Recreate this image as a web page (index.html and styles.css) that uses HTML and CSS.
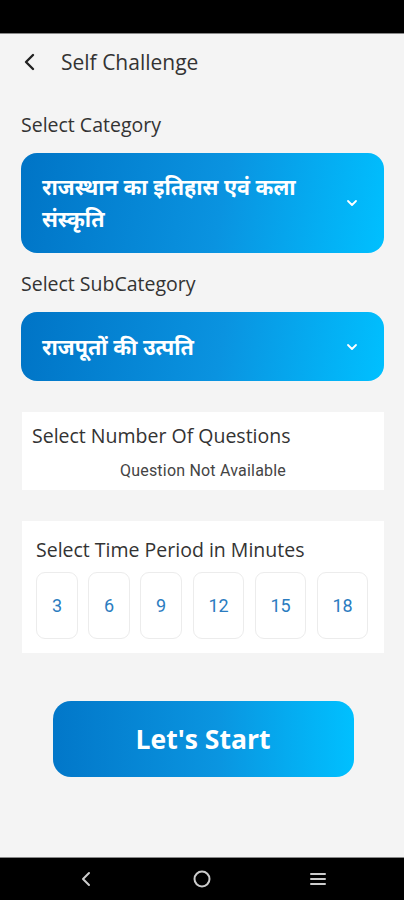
FILE: index.html
```html
<!DOCTYPE html>
<html lang="hi">
<head>
  <meta charset="UTF-8" />
  <meta name="viewport" content="width=device-width, initial-scale=1.0">
  <title>Self Challenge</title>
  <link rel="stylesheet" href="styles.css">
</head>
<body>
  <div class="status-bar"></div>

  <div class="screen">
    <div class="header">
      <svg class="back" width="14" height="18" viewBox="0 0 14 18">
        <path d="M10 2 L3 9 L10 16" fill="none" stroke="#222" stroke-width="2.4" stroke-linecap="round" stroke-linejoin="round"/>
      </svg>
      <span class="title">Self Challenge</span>
    </div>

    <div class="label">Select Category</div>
    <div class="dropdown tall">
      <span class="dd-text">राजस्थान का इतिहास एवं कला संस्कृति</span>
      <svg class="chev" width="12" height="8" viewBox="0 0 12 8">
        <path d="M2 2 L6 6 L10 2" fill="none" stroke="#fff" stroke-width="1.8" stroke-linecap="round" stroke-linejoin="round"/>
      </svg>
    </div>

    <div class="label">Select SubCategory</div>
    <div class="dropdown">
      <span class="dd-text">राजपूतों की उत्पति</span>
      <svg class="chev" width="12" height="8" viewBox="0 0 12 8">
        <path d="M2 2 L6 6 L10 2" fill="none" stroke="#fff" stroke-width="1.8" stroke-linecap="round" stroke-linejoin="round"/>
      </svg>
    </div>

    <div class="card questions">
      <div class="card-title">Select Number Of Questions</div>
      <div class="empty">Question Not Available</div>
    </div>

    <div class="card time">
      <div class="card-title">Select Time Period in Minutes</div>
      <div class="chips">
        <div class="chip">3</div>
        <div class="chip">6</div>
        <div class="chip">9</div>
        <div class="chip wide">12</div>
        <div class="chip wide">15</div>
        <div class="chip wide">18</div>
      </div>
    </div>

    <div class="start-wrap">
      <button type="button" class="start">Let's Start</button>
    </div>
  </div>

  <div class="nav-bar">
    <svg width="20" height="20" viewBox="0 0 20 20">
      <path d="M13 4 L7 10 L13 16" fill="none" stroke="#ccc" stroke-width="2" stroke-linecap="round" stroke-linejoin="round"/>
    </svg>
    <svg width="20" height="20" viewBox="0 0 20 20">
      <circle cx="10" cy="10" r="7.5" fill="none" stroke="#ccc" stroke-width="2"/>
    </svg>
    <svg width="20" height="20" viewBox="0 0 20 20">
      <path d="M3 5 H17 M3 10 H17 M3 15 H17" stroke="#ccc" stroke-width="2" stroke-linecap="round"/>
    </svg>
  </div>
</body>
</html>
```

FILE: styles.css
```css
body {
  margin: 0;
  width: 404px;
  height: 900px;
  background-color: #f4f4f4;
  font-family: "Open Sans", "Noto Sans Devanagari", "Noto Sans", sans-serif;
  color: #333;
  display: flex;
  flex-direction: column;
  overflow: hidden;
}
.status-bar {
  height: 33px;
  background: #000;
  border-bottom: 1px solid #888;
}
.screen {
  flex: 1;
  padding: 0 20px 0 21px;
}
.header {
  display: flex;
  align-items: center;
  height: 56px;
  padding-left: 2px;
  padding-bottom: 4px;
}
.back {
  margin-right: 24px;
}
.title {
  font-size: 21px;
  color: #333;
}
.label {
  font-size: 19.5px;
  line-height: 27px;
  color: #333;
  margin-top: 17px;
  margin-bottom: 15px;
}
.dropdown {
  display: flex;
  align-items: center;
  justify-content: space-between;
  min-height: 69px;
  padding: 0 26px 0 21px;
  border-radius: 16px;
  background: linear-gradient(100deg, #0074c6 0%, #0a93e0 55%, #00c0ff 100%);
  color: #fff;
  box-sizing: border-box;
}
.dropdown.tall {
  min-height: 100px;
  padding-top: 4px;
  padding-bottom: 4px;
}
.dd-text {
  font-weight: bold;
  font-size: 21.5px;
  line-height: 32px;
  max-width: 290px;
}
.card {
  background: #fff;
  margin-left: 1px;
}
.card-title {
  font-size: 19.5px;
  line-height: 26px;
  color: #333;
}
.questions {
  margin-top: 31px;
  height: 78px;
  padding: 11px 10px 0 10px;
  box-sizing: border-box;
}
.empty {
  text-align: center;
  font-family: Roboto, sans-serif;
  font-size: 16px;
  letter-spacing: 0.2px;
  color: #444;
  margin-top: 12px;
}
.time {
  margin-top: 31px;
  height: 132px;
  padding: 16px 0 0 14px;
  box-sizing: border-box;
  overflow: hidden;
}
.chips {
  display: flex;
  gap: 10px;
  margin-top: 9px;
}
.chip {
  flex: none;
  width: 42px;
  height: 67px;
  box-sizing: border-box;
  border: 1px solid #ececec;
  border-radius: 9px;
  display: flex;
  align-items: center;
  justify-content: center;
  font-family: Roboto, sans-serif;
  font-size: 18px;
  color: #2b7cc0;
}
.chip.wide {
  width: 51px;
  margin-left: 1px;
}
.start-wrap {
  display: flex;
  justify-content: center;
  margin-top: 48px;
}
.start {
  width: 301px;
  height: 76px;
  border: none;
  border-radius: 18px;
  background: linear-gradient(90deg, #0277c9 0%, #0a95e0 55%, #00c0ff 100%);
  color: #fff;
  font-family: "Open Sans", sans-serif;
  font-weight: bold;
  font-size: 26.5px;
  cursor: pointer;
  margin-left: 1px;
}
.nav-bar {
  height: 42px;
  background: #000;
  border-top: 1px solid #888;
  display: flex;
  align-items: center;
  justify-content: space-between;
  padding: 0 76px;
}
```
